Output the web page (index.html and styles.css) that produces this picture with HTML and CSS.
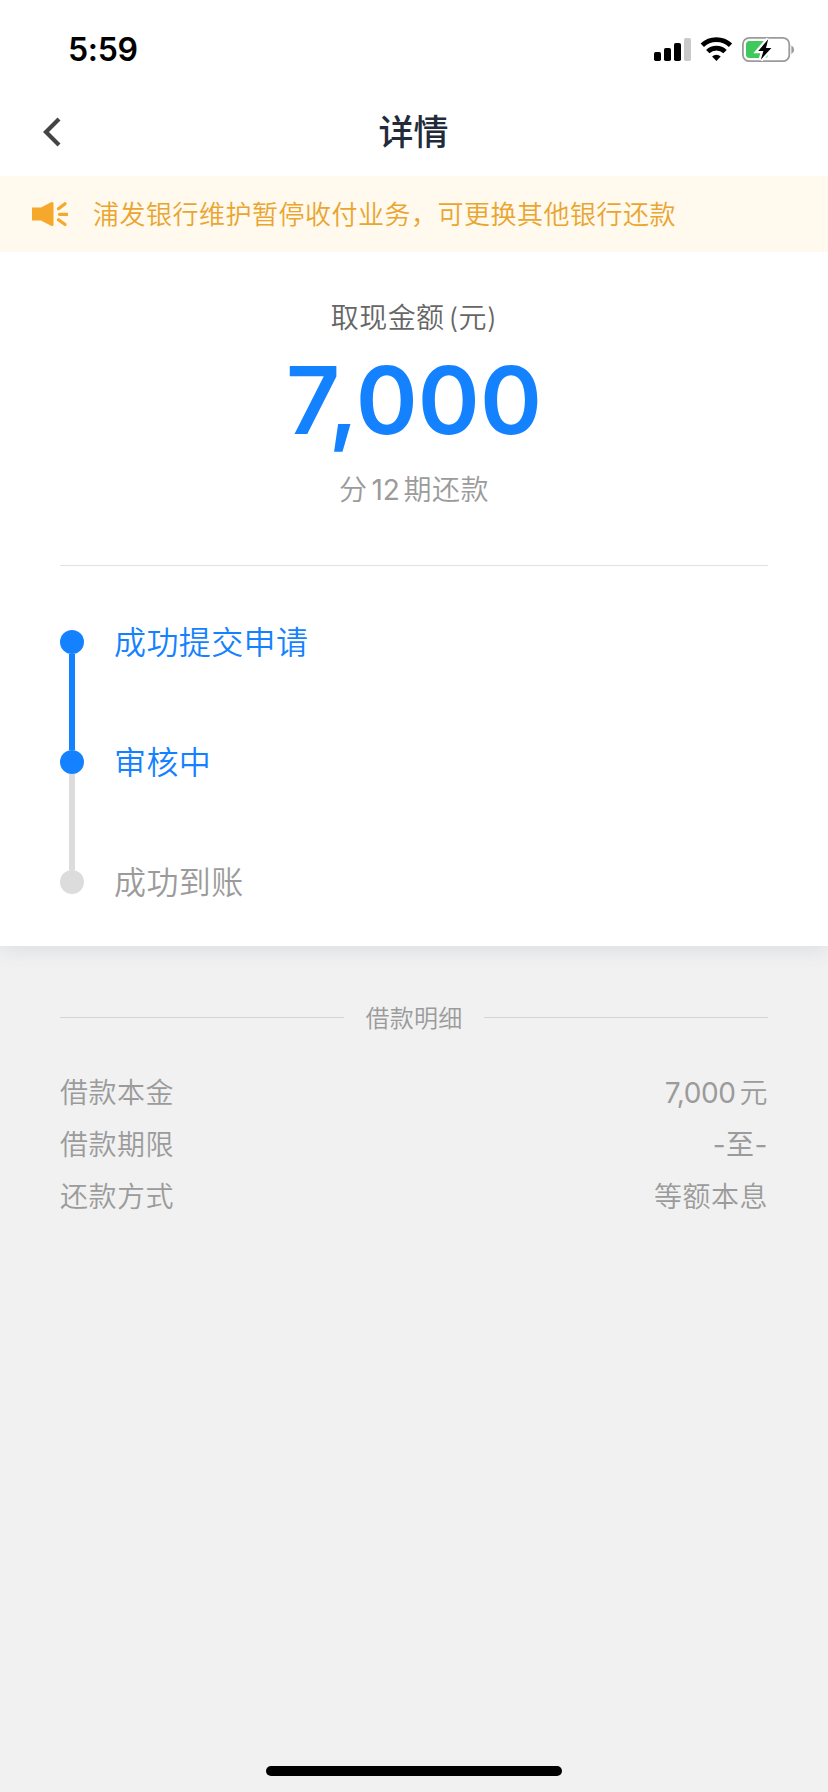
FILE: index.html
```html
<!DOCTYPE html>
<html lang="zh-CN">

<head>
    <meta charset="UTF-8">
    <meta name="viewport" content="width=device-width, initial-scale=1.0">
    <title>详情</title>
    <link rel="stylesheet" href="styles.css">
</head>

<body>

    <div class="card">
        <div class="status-bar">
            <span class="time">5:59</span>
            <svg class="status-icons" width="144" height="28" viewBox="0 0 144 28">
                <!-- signal -->
                <rect x="3" y="16" width="7" height="9" rx="1.8" />
                <rect x="13" y="12" width="7" height="13" rx="1.8" />
                <rect x="23" y="7" width="7" height="18" rx="1.8" />
                <rect x="33" y="2" width="7" height="23" rx="1.8" fill="#c9c9c9" />
                <!-- wifi -->
                <g fill="none" stroke="#000" stroke-width="4.8">
                    <path d="M51.3 9.3a20.2 20.2 0 0 1 28.2 0" />
                    <path d="M56.8 15.6a12.3 12.3 0 0 1 17.2 0" />
                </g>
                <path d="M61.1 20.6a6.2 6.2 0 0 1 8.6 0l-4.3 4.5z" />
                <!-- battery -->
                <rect x="91.9" y="1.8" width="46.4" height="23.4" rx="6.5" fill="#fff" stroke="#9b9b9b" stroke-width="1.8" />
                <path d="M140.4 9.5a4.6 4.6 0 0 1 0 8.4z" fill="#9b9b9b" />
                <rect x="95" y="5" width="22" height="17" rx="3.5" fill="#3fc95c" />
                <path d="M117.2 3.3L107.2 15h5.2l-2.6 8.7 10.6-11.8h-5.4z" stroke="#fff" stroke-width="4.5" />
                <path d="M117.2 3.3L107.2 15h5.2l-2.6 8.7 10.6-11.8h-5.4z" />
            </svg>
        </div>

        <div class="nav-bar">
            <svg class="back-icon" width="20" height="30" viewBox="0 0 20 30">
                <path d="M17 2L4 15l13 13" fill="none" stroke="#444" stroke-width="4.2" />
            </svg>
            <h1 class="nav-title">详情</h1>
        </div>

        <div class="notice">
            <svg class="notice-icon" width="36" height="26" viewBox="0 0 36 26">
                <path d="M0 6.5h9L19 1.3Q21.5.3 21.5 2.5v21q0 2.2-2.5 1.2L9 19.5H0z" fill="#f5a82b" />
                <path d="M26.5 7.8l6.5-5M27.5 13.3H35M26.5 18.8l6.5 4.7" fill="none" stroke="#f5a82b" stroke-width="3.2" stroke-linecap="round" />
            </svg>
            <span class="notice-text">浦发银行维护暂停收付业务，可更换其他银行还款</span>
        </div>

        <div class="amount">
            <p class="amount-label">取现金额<span class="paren">(</span>元<span class="paren-end">)</span></p>
            <p class="amount-value">7,000</p>
            <p class="amount-term">分<span class="num">12</span>期还款</p>
        </div>

        <ul class="steps">
            <li class="step done"><span class="dot"></span><span class="step-text">成功提交申请</span></li>
            <li class="step current"><span class="dot"></span><span class="step-text">审核中</span></li>
            <li class="step"><span class="dot"></span><span class="step-text">成功到账</span></li>
        </ul>
    </div>

    <div class="detail">
        <h2 class="detail-title"><span>借款明细</span></h2>
        <div class="detail-row">
            <span>借款本金</span>
            <span><span class="money">7,000</span>元</span>
        </div>
        <div class="detail-row">
            <span>借款期限</span>
            <span class="range">-至-</span>
        </div>
        <div class="detail-row">
            <span>还款方式</span>
            <span>等额本息</span>
        </div>
    </div>

    <div class="home-indicator"></div>

</body>

</html>
```

FILE: styles.css
```css
* {
    box-sizing: border-box;
    margin: 0;
    padding: 0;
}

body {
    font-family: Inter, "Noto Sans CJK SC", sans-serif;
    font-weight: 350;
    background-color: #f1f1f1;
    color: #9b9b9b;
    display: flex;
    flex-direction: column;
    height: 100vh;
    overflow: hidden;
}

.card {
    height: 946px;
    background-color: #fff;
    box-shadow: 0 4px 20px rgba(60, 90, 130, 0.12);
}

/* Status bar */
.status-bar {
    display: flex;
    justify-content: space-between;
    height: 88px;
    padding: 36px 33px 0 68px;
}

.time {
    font-size: 32px;
    font-weight: 600;
    line-height: 28px;
    letter-spacing: -0.3px;
    color: #000;
}

/* Nav bar */
.nav-bar {
    display: flex;
    align-items: center;
    height: 88px;
    padding: 0 63px 0 42px;
}

.nav-title {
    flex: 1;
    font-size: 35px;
    font-weight: 500;
    line-height: 88px;
    text-align: center;
    color: #222b3a;
}

/* Notice */
.notice {
    display: flex;
    align-items: center;
    height: 76px;
    padding-left: 32px;
    background-color: #fff9ee;
}

.notice-text {
    margin-left: 25px;
    padding-bottom: 3px;
    font-size: 26px;
    letter-spacing: 0.5px;
    color: #eaa52f;
}

/* Amount */
.amount {
    height: 314px;
    margin: 0 60px;
    padding-top: 45px;
    border-bottom: 1px solid #e2e2e2;
    text-align: center;
}

.amount-label {
    font-size: 28px;
    line-height: 42px;
    letter-spacing: 0.4px;
    color: #666;
}

.paren {
    margin-left: 4px;
}

.amount-value {
    font-size: 94px;
    font-weight: 600;
    line-height: 122px;
    color: #1482ff;
}

.amount-term {
    margin-top: 8px;
    font-size: 28px;
    line-height: 42px;
    letter-spacing: 0.5px;
}

.num {
    margin: 0 4px;
    font-weight: 400;
    letter-spacing: -0.3px;
}

/* Steps */
.steps {
    padding: 52px 60px 0;
    list-style: none;
}

.step {
    display: flex;
    position: relative;
    height: 120px;
    font-size: 32px;
    line-height: 48px;
    letter-spacing: 0.4px;
}

.step-text {
    padding-top: 1px;
}

.dot {
    width: 24px;
    height: 24px;
    margin: 12px 30px 0 0;
    border-radius: 50%;
    background-color: #dcdcdc;
}

/* line to the next step */
.step:not(:last-child)::before {
    content: "";
    position: absolute;
    top: 36px;
    left: 9px;
    width: 6px;
    height: 96px;
    background-color: #dcdcdc;
}

.step.done,
.step.current {
    color: #1482ff;
}

.step.done .dot,
.step.current .dot,
.step.done:not(:last-child)::before {
    background-color: #1482ff;
}

/* Detail */
.detail {
    flex: 1;
    padding: 52px 60px 0;
}

.detail-title {
    display: flex;
    align-items: center;
    margin-bottom: 30px;
    font-size: 24px;
    font-weight: 350;
    line-height: 36px;
    letter-spacing: 0.3px;
}

.detail-title span {
    padding-top: 3px;
}

.detail-title::before,
.detail-title::after {
    content: "";
    flex: 1;
    height: 1px;
    background-color: #d4d4d4;
}

.detail-title::before {
    margin-right: 21px;
}

.detail-title::after {
    margin-left: 21px;
}

.detail-row {
    display: flex;
    justify-content: space-between;
    font-size: 28px;
    line-height: 52px;
    letter-spacing: 0.5px;
}

.money {
    margin-right: 4px;
    font-weight: 400;
    letter-spacing: -0.4px;
}

.range {
    font-weight: 400;
}

.home-indicator {
    width: 296px;
    height: 10px;
    margin: 0 auto 16px;
    border-radius: 5px;
    background-color: #000;
}
```
